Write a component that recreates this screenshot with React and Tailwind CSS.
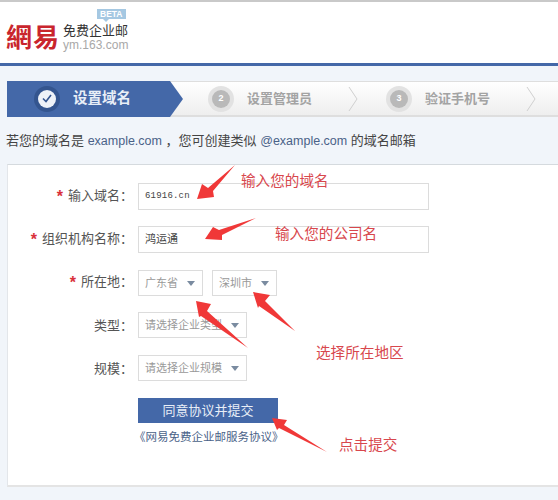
import React from 'react';

const FONT = "font-['Liberation_Sans','Noto_Sans_CJK_SC',sans-serif]";

const arrows = [
  '197,199 202,184 208,188 235,165 213,191 214,197',
  '205,239 213,227 219,230 256,218 222,235 222,240',
  '196,301 211,304 207,311 248,348 201,316 199,317',
  '253,292 270,295 265,301 295,331 259,306 258,308',
  '272,418 287,420 284,425 327,452 279,428 277,430',
];

const notes = [
  { text: '输入您的域名', className: 'left-[241px] top-[171px]' },
  { text: '输入您的公司名', className: 'left-[275px] top-[224px]' },
  { text: '选择所在地区', className: 'left-[316px] top-[343px]' },
  { text: '点击提交', className: 'left-[339px] top-[435px]' },
];

const Row = ({ label, required, className, children }) => (
  <div className={`flex items-center ${className}`}>
    <div className="w-[130px] pr-[5px] text-right text-[13px] leading-none text-[#555]">
      {required && <span className="mr-[5px] align-[-2px] text-[16px] font-bold leading-none text-[#d9313a]">*</span>}
      {label}：
    </div>
    {children}
  </div>
);

const TextBox = ({ children, mono }) => (
  <div className={`flex h-[27px] w-[291px] items-center border border-[#dcdcdc] bg-white pl-[6px] text-[#444] ${mono ? "font-['Liberation_Mono'] text-[9px] tracking-[0.2px]" : 'text-[11px]'}`}>
    {children}
  </div>
);

const Select = ({ children, className }) => (
  <div className={`flex h-[26px] items-center justify-between border border-[#dcdcdc] bg-white pl-[6px] pr-[7px] text-[11px] text-[#999] ${className}`}>
    <span className="whitespace-nowrap">{children}</span>
    <span className="h-0 w-0 border-x-[4px] border-t-[5px] border-x-transparent border-t-[#7a8ba0]" />
  </div>
);

const Step = ({ n, label, className }) => (
  <div className={`flex items-center ${className}`}>
    <div className="flex h-[26px] w-[26px] items-center justify-center rounded-full bg-[#e2e2e2]">
      <div className="flex h-[18px] w-[18px] items-center justify-center rounded-full bg-[#b9b9b9] text-[9px] font-bold text-white">{n}</div>
    </div>
    <span className="ml-[13px] text-[13px] font-bold text-[#a3a3a3]">{label}</span>
    <svg className="ml-[36px]" width="10" height="24" viewBox="0 0 10 24" fill="none">
      <path d="M1 0 L9 12 L1 24" stroke="#cfcfcf" strokeWidth="1" />
    </svg>
  </div>
);

export default function App() {
  return (
    <div className={`relative h-[500px] w-[558px] overflow-hidden bg-[#f1f5fa] ${FONT}`}>
      <header className="relative h-[66px] border-t-2 border-b-[3px] border-t-[#c9c9c9] border-b-[#4468a8] bg-white">
        <div className="flex items-start pl-[6px] pt-[18px]">
          <span className="font-['Noto_Sans_CJK_TC'] text-[26px] font-bold leading-[32px] tracking-[1px] text-[#c9252d]">網易</span>
          <div className="ml-[3px] mt-[3px]">
            <div className="text-[13px] leading-[15px] text-[#333]">免费企业邮</div>
            <div className="text-[12px] leading-[15px] text-[#a8a8a8]">ym.163.com</div>
          </div>
        </div>
        <div className="absolute left-[97px] top-[7px] bg-[#a5c8e2] px-[3px] text-[8.5px] font-bold leading-[10px] text-white">
          BETA
          <span className="absolute left-[6px] top-full h-0 w-0 border-x-[3px] border-t-[3px] border-x-transparent border-t-[#a5c8e2]" />
        </div>
      </header>

      <div className="pl-[7px] pt-[15px]">
        <nav className="flex h-[36px] items-center border-b-2 border-t border-[#dedede] bg-gradient-to-b from-white to-[#eeeeee]">
          <div className="relative -my-px flex h-[36px] w-[163px] shrink-0 items-center bg-[#4468a8] pl-[27px]">
            <div className="flex h-[26px] w-[26px] items-center justify-center rounded-full bg-[#34558f]">
              <div className="flex h-[18px] w-[18px] items-center justify-center rounded-full bg-[#eef2f8]">
                <svg width="10" height="9" viewBox="0 0 10 9" fill="none">
                  <path d="M1 4.5 L4 7.5 L9 1" stroke="#34558f" strokeWidth="1.6" />
                </svg>
              </div>
            </div>
            <span className="ml-[13px] text-[14.5px] font-bold text-[#e8eef7]">设置域名</span>
            <span className="absolute left-full top-0 h-0 w-0 border-y-[18px] border-l-[13px] border-y-transparent border-l-[#4468a8]" />
          </div>
          <Step n="2" label="设置管理员" className="ml-[38px]" />
          <Step n="3" label="验证手机号" className="ml-[28px]" />
        </nav>

        <p className="-ml-px mt-[15px] whitespace-nowrap text-[13px] leading-[18px] text-[#444]">
          若您的域名是 <span className="text-[12.5px] text-[#4a6288]">example.com</span> ，您可创建类似 <span className="text-[12.5px] text-[#4a6288]">@example.com</span> 的域名邮箱
        </p>

        <main className="mt-[14px] h-[323px] border-b-2 border-l border-t border-b-[#e4e4e4] border-l-[#e3e6ea] border-t-[#d5dade] bg-white pt-[18px]">
          <Row label="输入域名" required><TextBox mono>61916.cn</TextBox></Row>
          <Row label="组织机构名称" required className="mt-[16px]"><TextBox>鸿运通</TextBox></Row>
          <Row label="所在地" required className="mt-[17px]">
            <Select className="w-[65px]">广东省</Select>
            <Select className="ml-[9px] w-[65px]">深圳市</Select>
          </Row>
          <Row label="类型" className="mt-[16px]"><Select className="w-[109px]">请选择企业类型</Select></Row>
          <Row label="规模" className="mt-[17px]"><Select className="w-[109px]">请选择企业规模</Select></Row>
          <div className="ml-[130px] mt-[17px] w-[140px]">
            <button className="h-[25px] w-[140px] bg-[#4468a8] text-[13px] text-[#e8eef7]">同意协议并提交</button>
            <div className="-ml-[4px] mt-[6px] whitespace-nowrap text-[11.5px] leading-[16px] text-[#4a6288]">《网易免费企业邮服务协议》</div>
          </div>
        </main>
      </div>

      <svg className="absolute left-0 top-0" width="558" height="500" viewBox="0 0 558 500">
        {arrows.map((points) => (
          <polygon key={points} points={points} fill="#f03838" />
        ))}
      </svg>
      {notes.map((note) => (
        <span key={note.text} className={`absolute whitespace-nowrap text-[14.6px] leading-[20px] text-[#d8474d] ${note.className}`}>
          {note.text}
        </span>
      ))}
    </div>
  );
}
